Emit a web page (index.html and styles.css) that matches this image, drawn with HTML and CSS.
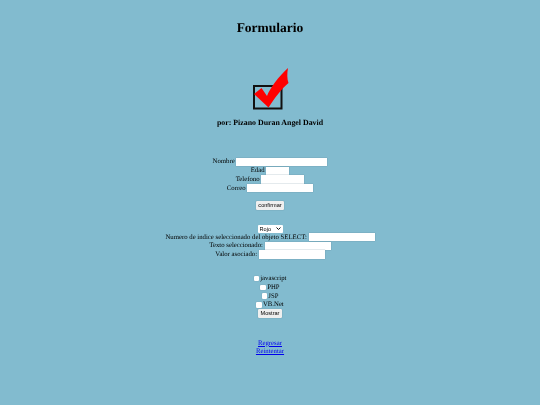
FILE: index.html
```html
<!DOCTYPE html>
<html lang="es">
<head>
<meta charset="utf-8">
<title>Formulario</title>
<link rel="stylesheet" href="styles.css">
</head>
<body>
<h1 class="title">Formulario</h1>
<svg class="logo" width="36" height="42" viewBox="0 0 36 42" aria-hidden="true">
  <rect x="1" y="18" width="27.5" height="22.5" fill="none" stroke="#111" stroke-width="2"/>
  <path d="M1 26 L8.5 20 L14 28 C17 20 26 8 35 0 C34 5 34 11 35.5 15 C29 20 21 31 15.5 39.5 Z" fill="#f00"/>
</svg>
<h2 class="author">por: Pizano Duran Angel David</h2>

<form class="group group-data">
  <div class="row"><label>Nombre</label><input class="w91" type="text"></div>
  <div class="row"><label>Edad</label><input class="w23" type="text"></div>
  <div class="row"><label>Telefono</label><input class="w43" type="text"></div>
  <div class="row"><label>Correo</label><input class="w66" type="text"></div>
  <button class="btn btn-confirm" type="button">confirmar</button>
</form>

<form class="group group-select">
  <select class="sel"><option>Rojo</option><option>Verde</option><option>Azul</option></select>
  <div class="row"><label>Numero de indice seleccionado del objeto SELECT:</label><input class="w66" type="text"></div>
  <div class="row"><label>Texto seleccionado:</label><input class="w66" type="text"></div>
  <div class="row"><label>Valor asociado:</label><input class="w66" type="text"></div>
</form>

<form class="group group-check">
  <div class="row"><input class="chk" type="checkbox"><label>javascript</label></div>
  <div class="row"><input class="chk" type="checkbox"><label>PHP</label></div>
  <div class="row"><input class="chk" type="checkbox"><label>JSP</label></div>
  <div class="row"><input class="chk" type="checkbox"><label>VB.Net</label></div>
  <button class="btn" type="button">Mostrar</button>
</form>

<nav class="links">
  <a href="#">Regresar</a>
  <a href="#">Reintentar</a>
</nav>
</body>
</html>
```
FILE: styles.css
```css
* { box-sizing: border-box; }
html, body { height: 100%; }
body {
  margin: 0;
  padding-top: 20px;
  background: #82bbcf;
  color: #000;
  font-family: "Liberation Serif", "Times New Roman", serif;
  font-size: 6.75px;
  line-height: 9px;
  text-rendering: geometricPrecision;
  display: flex;
  flex-direction: column;
  align-items: center;
  overflow: hidden;
  filter: blur(0.3px);
}
.title { margin: 0; font-size: 13.5px; line-height: 16px; font-weight: bold; }
.logo { display: block; margin-top: 32px; margin-left: 1px; }
.author { margin: 8px 0 0; font-size: 7.86px; line-height: 10px; font-weight: bold; }
.group { display: flex; flex-direction: column; align-items: center; }
.group-data { margin-top: 29.5px; }
.group-select { margin-top: 15px; }
.group-check { margin-top: 15px; }
.row { display: flex; align-items: center; justify-content: center; height: 8.8px; gap: 1.7px; }
.row input[type="text"] {
  height: 8.4px;
  padding: 0;
  border: 0;
  background: #fff;
  box-shadow: 0 0 1px #5f8494;
}
.w91 { width: 91px; }
.w66 { width: 66px; }
.w43 { width: 43px; }
.w23 { width: 23px; }
.chk {
  appearance: none;
  width: 5.5px;
  height: 5.5px;
  margin: 0 -0.5px 0 0;
  background: #fff;
  border: 0;
  border-radius: 1px;
  box-shadow: 0 0 1px #5f8494;
}
.btn {
  height: 9px;
  padding: 0 2.5px;
  border: 0;
  border-radius: 1px;
  background: #efefef;
  box-shadow: 0 0 1px #55707c;
  color: #000;
  font-family: "Liberation Sans", Arial, sans-serif;
  font-size: 5.6px;
  line-height: 9px;
}
.btn-confirm { margin-top: 8px; }
.sel {
  appearance: none;
  width: 25px;
  height: 8px;
  padding: 0 0 0 2px;
  border: 0;
  border-radius: 1px;
  background: #fff url("data:image/svg+xml,%3Csvg xmlns='http://www.w3.org/2000/svg' width='5' height='3' viewBox='0 0 5 3'%3E%3Cpath d='M.5.5 2.5 2.5 4.5.5' fill='none' stroke='%23111' stroke-width='1'/%3E%3C/svg%3E") no-repeat right 2px center;
  color: #000;
  font-family: "Liberation Sans", Arial, sans-serif;
  font-size: 5.6px;
  line-height: 8px;
}
.links { margin-top: 21.5px; display: flex; flex-direction: column; align-items: center; line-height: 8.5px; }
.links a { color: #0000ee; }
```
